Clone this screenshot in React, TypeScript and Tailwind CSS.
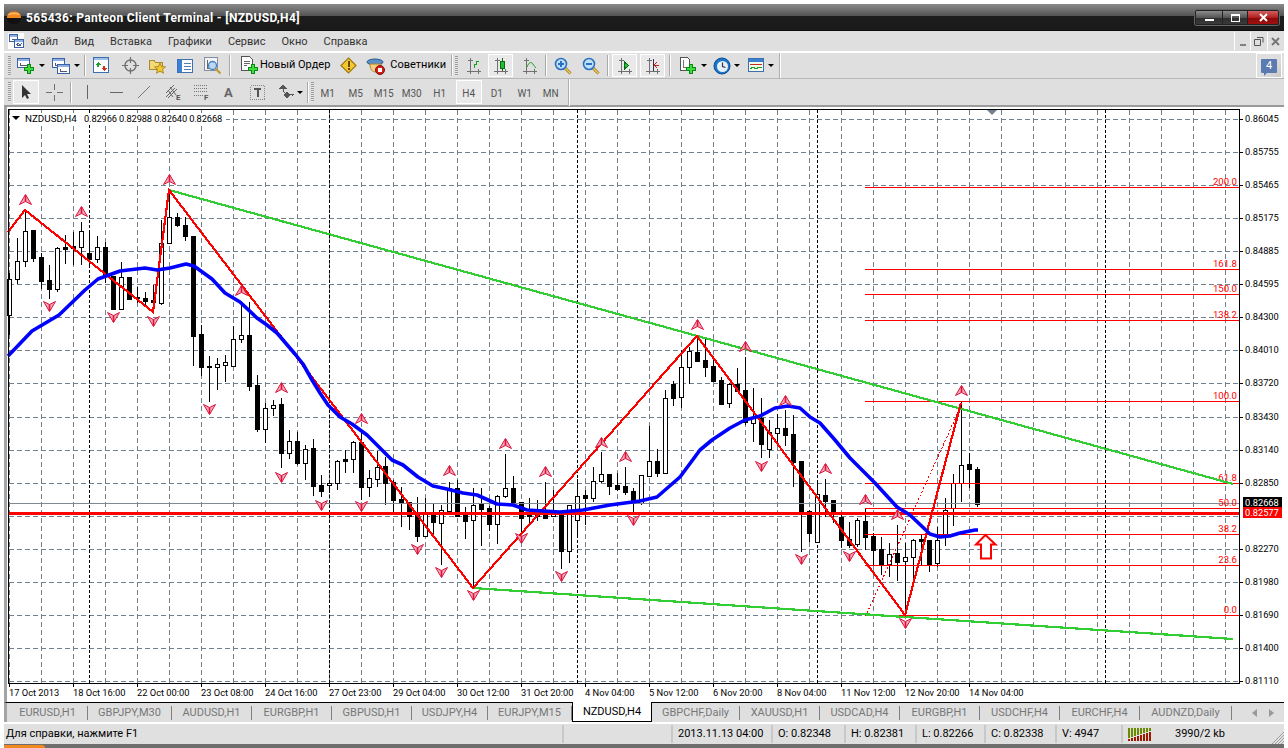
import type { ReactNode } from "react";

// [wick top, body top, body bottom, wick bottom, white?] for x = 9 + 8 * index
const CANDLES: [number, number, number, number, number][] = [
  [273, 279, 315, 335, 1], [238, 261, 279, 284, 1], [210, 231, 261, 267, 1], [230, 230, 258, 262, 0],
  [253, 257, 281, 289, 0], [265, 280, 289, 299, 0], [247, 248, 289, 292, 1], [235, 247, 249, 264, 0],
  [232, 246, 248, 265, 0], [222, 231, 247, 265, 1], [230, 253, 259, 267, 0], [236, 247, 259, 263, 1],
  [242, 247, 275, 283, 0], [276, 276, 309, 309, 0], [262, 277, 309, 309, 1], [277, 277, 299, 299, 0],
  [287, 297, 298, 303, 0], [292, 298, 301, 305, 0], [285, 300, 302, 312, 0], [220, 243, 303, 305, 1],
  [190, 217, 243, 243, 1], [213, 217, 225, 227, 0], [217, 225, 236, 241, 0], [236, 236, 336, 366, 0],
  [325, 334, 367, 376, 0], [356, 366, 367, 402, 0], [358, 364, 367, 390, 1], [355, 362, 365, 382, 1],
  [326, 339, 366, 366, 1], [303, 335, 339, 343, 1], [302, 335, 386, 391, 0], [375, 385, 429, 432, 0],
  [403, 408, 429, 443, 1], [400, 405, 408, 416, 1], [398, 404, 453, 468, 0], [430, 441, 453, 459, 1],
  [432, 441, 463, 465, 0], [445, 449, 463, 480, 1], [439, 448, 486, 496, 0], [475, 485, 491, 497, 0],
  [482, 483, 485, 490, 1], [460, 461, 483, 490, 1], [450, 459, 461, 473, 0], [441, 442, 459, 473, 1],
  [433, 442, 487, 500, 0], [470, 478, 487, 497, 1], [451, 467, 479, 487, 1], [457, 466, 483, 505, 0],
  [480, 482, 500, 515, 0], [487, 499, 503, 527, 0], [502, 502, 516, 530, 0], [497, 514, 536, 542, 0],
  [498, 514, 536, 537, 1], [504, 514, 522, 535, 0], [505, 510, 523, 565, 1], [482, 488, 511, 512, 1],
  [480, 488, 516, 517, 0], [507, 515, 521, 539, 0], [488, 505, 520, 588, 1], [488, 504, 509, 546, 0],
  [506, 508, 524, 531, 0], [495, 496, 524, 544, 1], [454, 488, 496, 498, 1], [476, 488, 503, 505, 0],
  [502, 502, 518, 532, 0], [498, 515, 516, 526, 0], [500, 514, 516, 521, 1], [482, 514, 518, 518, 0],
  [490, 514, 516, 517, 1], [514, 514, 551, 569, 0], [505, 505, 551, 563, 1], [479, 496, 520, 538, 1],
  [490, 495, 498, 525, 0], [467, 481, 498, 502, 1], [452, 474, 481, 483, 1], [474, 474, 486, 495, 0],
  [473, 485, 489, 491, 0], [467, 486, 492, 495, 0], [488, 491, 503, 512, 0], [475, 475, 503, 505, 1],
  [426, 461, 476, 477, 1], [449, 461, 473, 477, 0], [390, 398, 473, 474, 1], [381, 384, 398, 406, 0],
  [350, 367, 397, 408, 1], [347, 351, 367, 384, 1], [337, 352, 361, 362, 0], [338, 360, 367, 377, 0],
  [357, 366, 381, 382, 0], [377, 380, 404, 404, 0], [383, 384, 403, 408, 1], [368, 384, 391, 392, 0],
  [357, 390, 422, 425, 0], [388, 417, 423, 442, 1], [398, 418, 444, 458, 0], [420, 432, 449, 458, 1],
  [414, 428, 433, 443, 1], [410, 428, 435, 446, 0], [415, 434, 462, 487, 0], [461, 461, 512, 552, 0],
  [510, 511, 533, 542, 0], [482, 494, 542, 542, 1], [479, 495, 501, 517, 0], [500, 500, 514, 523, 0],
  [513, 517, 540, 548, 0], [522, 539, 545, 548, 0], [518, 520, 544, 547, 1], [509, 521, 537, 550, 0],
  [533, 536, 550, 565, 0], [537, 549, 565, 575, 0], [543, 554, 564, 577, 1], [525, 553, 562, 581, 0],
  [543, 557, 561, 613, 1], [539, 540, 557, 582, 1], [535, 539, 541, 565, 0], [540, 540, 565, 572, 0],
  [527, 540, 563, 567, 1], [498, 510, 537, 546, 1], [474, 483, 508, 526, 1], [402, 465, 483, 502, 1],
  [453, 464, 469, 488, 0], [467, 469, 504, 507, 0],
];

const GRID_Y = Array.from({ length: 18 }, (_, i) => 119 + (562 / 17) * i);
const GRID_X = Array.from({ length: 39 }, (_, i) => 9 + 32 * i);
const SEPARATORS = [89, 329, 577, 817, 1105];

const PRICES = [
  "0.86045", "0.85755", "0.85465", "0.85175", "0.84885", "0.84595", "0.84300", "0.84010", "0.83720",
  "0.83430", "0.83140", "0.82850", "", "0.82270", "0.81980", "0.81690", "0.81400", "0.81110",
];

const TIMES: [number, string][] = [
  [9, "17 Oct 2013"], [73, "18 Oct 16:00"], [137, "22 Oct 00:00"], [201, "23 Oct 08:00"], [265, "24 Oct 16:00"],
  [329, "27 Oct 23:00"], [393, "29 Oct 04:00"], [457, "30 Oct 12:00"], [521, "31 Oct 20:00"], [585, "4 Nov 04:00"],
  [649, "5 Nov 12:00"], [713, "6 Nov 20:00"], [777, "8 Nov 04:00"], [841, "11 Nov 12:00"], [905, "12 Nov 20:00"],
  [969, "14 Nov 04:00"],
];

const FIBO: [number, string][] = [
  [187, "200.0"], [269, "161.8"], [294, "150.0"], [320, "138.2"], [401, "100.0"], [483, "61.8"], [508, "50.0"],
  [534, "38.2"], [565, "23.6"], [615, "0.0"],
];

const FRACTALS_UP: [number, number][] = [
  [25, 200], [81, 212], [169, 180], [241, 291], [281, 388], [361, 419], [449, 471], [505, 444], [545, 472],
  [601, 443], [625, 457], [697, 325], [745, 347], [785, 401], [825, 469], [865, 500], [897, 515], [961, 391],
];

const FRACTALS_DOWN: [number, number][] = [
  [49, 306], [113, 317], [153, 321], [209, 409], [281, 477], [321, 505], [361, 506], [417, 549], [441, 572],
  [473, 595], [521, 538], [561, 576], [633, 520], [761, 466], [801, 559], [849, 556], [905, 623],
];

const ZIGZAG = "8,232 25,210 153,312 169,190 473,588 697,336 905,615 961,403";

const MA =
  "8,356 32,331 59,315 85,290 98,279 120,271 145,268 157,270 170,268 186,264 194,266 212,279 225,293 240,302 " +
  "257,318 267,325 277,333 295,354 303,364 312,380 320,393 328,405 340,417 352,424 367,435 380,448 392,460 " +
  "403,465 418,477 433,486 447,489 463,493 477,495 497,504 513,505 527,510 560,512 583,510 610,505 640,501 " +
  "657,497 680,477 700,450 712,440 730,428 745,420 760,416 775,408 788,406 800,408 810,417 820,423 835,440 " +
  "850,458 875,483 897,507 910,515 930,534 940,537 950,536 960,533 975,530 978,530";

const TABS: [string, string][] = [
  ["EURUSD,H1", "w-[80px]"], ["GBPJPY,M30", "w-[84px]"], ["AUDUSD,H1", "w-[80px]"], ["EURGBP,H1", "w-[80px]"],
  ["GBPUSD,H1", "w-[80px]"], ["USDJPY,H4", "w-[76px]"], ["EURJPY,M15", "w-[84px]"],
];

const TABS_AFTER: [string, string][] = [
  ["GBPCHF,Daily", "w-[88px]"], ["XAUUSD,H1", "w-[80px]"], ["USDCAD,H4", "w-[80px]"], ["EURGBP,H1", "w-[80px]"],
  ["USDCHF,H4", "w-[80px]"], ["EURCHF,H4", "w-[80px]"], ["AUDNZD,Daily", "w-[92px]"],
];

const MENU = ["Файл", "Вид", "Вставка", "Графики", "Сервис", "Окно", "Справка"];

function Icon({ children, w = 18, h = 18 }: { children: ReactNode; w?: number; h?: number }) {
  return (
    <svg width={w} height={h} viewBox={`0 0 ${w} ${h}`} className="block shrink-0" shapeRendering="crispEdges">
      {children}
    </svg>
  );
}

function Caret() {
  return <span className="ml-[3px] h-0 w-0 border-x-[3px] border-t-[3px] border-x-transparent border-t-black" />;
}

function Sep({ className }: { className: string }) {
  return <span className={`h-[21px] w-[2px] border-l border-r border-l-[#a8a8a8] border-r-white ${className}`} />;
}

function Grip() {
  return (
    <span className="block h-[20px] w-[3px] bg-[repeating-linear-gradient(to_bottom,#9a9a9a_0,#9a9a9a_1px,#e8e8e8_1px,#e8e8e8_2px)]" />
  );
}

function PlusBadge({ x, y }: { x: number; y: number }) {
  return (
    <g>
      <rect x={x + 3} y={y} width="4" height="10" fill="#0a8a14" />
      <rect x={x} y={y + 3} width="10" height="4" fill="#0a8a14" />
      <rect x={x + 4} y={y + 1} width="2" height="8" fill="#3fdc3f" />
      <rect x={x + 1} y={y + 4} width="8" height="2" fill="#3fdc3f" />
    </g>
  );
}

function MiniWindow({ x, y, w, h }: { x: number; y: number; w: number; h: number }) {
  return (
    <g>
      <rect x={x + 0.5} y={y + 0.5} width={w} height={h} fill="#fff" stroke="#3a62a8" />
      <rect x={x + 1} y={y + 1} width={w - 1} height="2" fill="#8fb0e0" />
      <path d={`M${x + 3} ${y + 5}v${h - 7}h${w - 5}`} stroke="#556" fill="none" />
    </g>
  );
}

function Axes({ children }: { children?: ReactNode }) {
  return (
    <Icon w={16} h={18}>
      <path d="M4.5 1v16M2 3.5h5M1 14.5h14M12.5 12v5" stroke="#707070" fill="none" />
      {children}
    </Icon>
  );
}

function Magnifier({ minus }: { minus?: boolean }) {
  return (
    <Icon w={18} h={18}>
      <g shapeRendering="auto">
        <path d="M10.5 10.5l6 6" stroke="#a07a20" strokeWidth="3" />
        <path d="M10.5 10.5l6 6" stroke="#f0d060" strokeWidth="1.3" />
        <circle cx="7" cy="7" r="5.5" fill="#bfe0f8" stroke="#2a70c0" strokeWidth="1.6" />
      </g>
      <rect x="4" y="6" width="6" height="2" fill="#2a70c0" />
      {!minus && <rect x="6" y="4" width="2" height="6" fill="#2a70c0" />}
    </Icon>
  );
}

function TitleBar() {
  return (
    <div className="flex h-[27px] items-center bg-[linear-gradient(to_bottom,#8a8a8a_0,#555_43%,#1d1d1d_44%,#1a1a1a_96%,#000_100%)] pl-[2px] pr-[5px]">
      <svg width="16" height="16" viewBox="0 0 16 16" className="shrink-0">
        <path d="M1 8c0-5 3-6.5 7-6.5S15 3 15 8z" fill="#f08a20" />
        <path d="M2 5c1-3 11-3 12 0-3-1-9-1-12 0z" fill="#fbc070" />
        <path d="M1 8h14c0 4-3 6-7 6S1 12 1 8z" fill="#111" />
      </svg>
      <span className="ml-[4px] font-['Roboto'] text-[12px] font-bold tracking-[0.33px] whitespace-nowrap text-white">
        565436: Panteon Client Terminal - [NZDUSD,H4]
      </span>
      <div className="ml-auto flex h-[15px] overflow-hidden rounded-[2px] border border-[#222] shadow-[0_0_0_1px_#666]">
        <div className="flex w-[26px] items-end justify-center bg-[linear-gradient(to_bottom,#8c8c8c,#555_50%,#2e2e2e_52%,#3a3a3a)] pb-[3px]">
          <span className="h-[2px] w-[9px] bg-white" />
        </div>
        <div className="flex w-[26px] items-center justify-center border-x border-[#222] bg-[linear-gradient(to_bottom,#8c8c8c,#555_50%,#2e2e2e_52%,#3a3a3a)]">
          <span className="h-[8px] w-[9px] border border-t-2 border-white" />
        </div>
        <div className="flex w-[30px] items-center justify-center bg-[linear-gradient(to_bottom,#d06060,#b02020_50%,#8a0a0a_52%,#a01010)]">
          <svg width="9" height="9" viewBox="0 0 9 9">
            <path d="M1 1l7 7M8 1l-7 7" stroke="#fff" strokeWidth="2" />
          </svg>
        </div>
      </div>
    </div>
  );
}

function MenuBar() {
  return (
    <div className="flex h-[20px] items-center bg-[#dfdfdf] pl-[4px] text-[11px] text-[#333]">
      <Icon w={16} h={16}>
        <rect width="16" height="16" fill="#fff" />
        <MiniWindow x={1} y={1} w={8} h={7} />
        <MiniWindow x={6} y={6} w={9} h={8} />
        <path d="M8 12l2-2 2 2 2-2" stroke="#3a62a8" fill="none" />
      </Icon>
      <div className="ml-[7px] flex gap-[16px] pt-[2px]">
        {MENU.map((item) => (
          <span key={item}>{item}</span>
        ))}
      </div>
      <div className="ml-auto flex h-[18px] items-center pr-[1px]">
        <span className="flex h-[18px] w-[16px] items-end justify-center border-l border-white pb-[4px]">
          <span className="h-[2px] w-[6px] bg-[#808080]" />
        </span>
        <span className="flex h-[18px] w-[17px] items-center justify-center border-l border-white text-[#555]">
          <svg width="10" height="10" viewBox="0 0 10 10">
            <path d="M3 1.5h6v5M0.5 3.5h6v6h-6z" stroke="#555" fill="none" />
          </svg>
        </span>
        <span className="flex h-[18px] w-[16px] items-center justify-center border-l border-white">
          <svg width="9" height="9" viewBox="0 0 9 9">
            <path d="M1 1l7 7M8 1l-7 7" stroke="#777" strokeWidth="2" />
          </svg>
        </span>
      </div>
    </div>
  );
}

function ToolbarOne() {
  return (
    <div className="relative flex h-[28px] items-center border-t-2 border-b border-t-white border-b-[#b8b8b8] bg-[#dfdfdf] pl-[4px]">
      <Grip />
      <div className="ml-[5px] flex items-center">
        <Icon w={20} h={18}>
          <MiniWindow x={1} y={1} w={12} h={9} />
          <PlusBadge x={8} y={7} />
        </Icon>
        <Caret />
      </div>
      <div className="ml-[6px] flex items-center">
        <Icon w={20} h={18}>
          <MiniWindow x={1} y={1} w={12} h={9} />
          <MiniWindow x={6} y={7} w={12} h={9} />
        </Icon>
        <Caret />
      </div>
      <Sep className="ml-[4px]" />
      <div className="ml-[7px]">
        <Icon w={17} h={17}>
          <rect x="0.5" y="0.5" width="15" height="15" fill="#fff" stroke="#3a70b0" />
          <rect x="1" y="1" width="14" height="2" fill="#a0c0e8" />
          <path d="M5 5l3 3H6v2H4V8H2z" fill="#20a030" />
          <path d="M11 14l-3-3h2V9h2v2h2z" fill="#d03020" />
        </Icon>
      </div>
      <div className="ml-[12px]">
        <Icon w={17} h={17}>
          <g shapeRendering="auto">
            <circle cx="8.5" cy="8.5" r="5.5" fill="none" stroke="#707070" strokeWidth="1.4" />
            <path d="M8.5 0v6M8.5 11v6M0 8.5h6M11 8.5h6" stroke="#707070" strokeWidth="1.2" />
          </g>
        </Icon>
      </div>
      <div className="ml-[9px]">
        <Icon w={18} h={17}>
          <path d="M1 3h5l1 2h7v7H1z" fill="#f5d878" stroke="#a88a30" />
          <path
            d="M12 6l1.6 3.6 3.9.3-3 2.5 1 3.8-3.5-2-3.5 2 1-3.8-3-2.5 3.9-.3z"
            fill="#f0c830"
            stroke="#b08a20"
            shapeRendering="auto"
          />
        </Icon>
      </div>
      <div className="ml-[11px]">
        <Icon w={16} h={16}>
          <rect x="0.5" y="1.5" width="15" height="13" fill="#fff" stroke="#4070b0" />
          <rect x="1" y="2" width="4" height="12" fill="#3c80d8" />
          <path d="M7 5h7M7 8h7M7 11h7" stroke="#5080b8" />
        </Icon>
      </div>
      <div className="ml-[11px]">
        <Icon w={18} h={18}>
          <rect x="0.5" y="0.5" width="13" height="13" fill="#f4f4f4" stroke="#8090a8" />
          <path d="M3 3v8h8" stroke="#666" fill="none" />
          <g shapeRendering="auto">
            <circle cx="8.5" cy="8.5" r="4" fill="#bcd8f0" stroke="#4a80c0" strokeWidth="1.3" />
            <path d="M11.5 11.5l5 5" stroke="#c09a30" strokeWidth="2.2" />
          </g>
        </Icon>
      </div>
      <Sep className="ml-[7px]" />
      <div className="ml-[9px] flex items-center">
        <Icon w={19} h={19}>
          <path d="M1.5 0.5h8l3 3v11h-11z" fill="#fff" stroke="#555" />
          <path d="M4 5h6M4 7h6M4 9h3" stroke="#666" />
          <PlusBadge x={8} y={8} />
        </Icon>
        <span className="ml-[1px] whitespace-nowrap text-[11px] text-black">Новый Ордер</span>
      </div>
      <div className="ml-[10px]">
        <Icon w={17} h={17}>
          <g shapeRendering="auto">
            <path d="M8.5 1L16 8.5 8.5 16 1 8.5z" fill="#f4c830" stroke="#a07a10" strokeWidth="1.2" />
          </g>
          <rect x="8" y="4" width="2" height="6" fill="#6a4a00" />
          <rect x="8" y="11" width="2" height="2" fill="#6a4a00" />
        </Icon>
      </div>
      <div className="ml-[9px] flex items-center">
        <Icon w={20} h={18}>
          <g shapeRendering="auto">
            <ellipse cx="9" cy="5" rx="8" ry="3" fill="#5a90c8" stroke="#2a5a90" />
            <path d="M4 7c0 5 2 8 6 8s5-4 5-8z" fill="#f4d080" stroke="#b08030" />
            <circle cx="14" cy="13" r="4.5" fill="#d02018" stroke="#801010" />
            <rect x="12" y="11" width="4" height="4" fill="#fff" />
          </g>
        </Icon>
        <span className="ml-[4px] whitespace-nowrap text-[11px] text-black">Советники</span>
      </div>
      <Sep className="ml-[5px]" />
      <span className="ml-[2px]">
        <Grip />
      </span>
      <div className="ml-[8px]">
        <Axes>
          <path d="M8.5 11V7.5h2V4h2" stroke="#10a020" fill="none" />
        </Axes>
      </div>
      <div className="ml-[6px] flex h-[23px] w-[25px] items-center justify-center border border-white bg-[#e9e9e9] bg-[radial-gradient(#cfcfcf_0.6px,transparent_0.7px)] bg-[length:2px_2px]">
        <Axes>
          <rect x="7.5" y="4.5" width="4" height="7" fill="#20c030" stroke="#0a6a14" />
          <path d="M9.5 1v3M9.5 12v2" stroke="#0a6a14" />
        </Axes>
      </div>
      <div className="ml-[9px]">
        <Axes>
          <path d="M5 10c2-5 4-5 5-4s2 3 4 5" stroke="#10a020" fill="none" shapeRendering="auto" />
        </Axes>
      </div>
      <Sep className="ml-[7px]" />
      <div className="ml-[7px]">
        <Magnifier />
      </div>
      <div className="ml-[10px]">
        <Magnifier minus />
      </div>
      <Sep className="ml-[7px]" />
      <div className="ml-[3px] flex h-[23px] w-[25px] items-center justify-center border border-white bg-[#e9e9e9] bg-[radial-gradient(#cfcfcf_0.6px,transparent_0.7px)] bg-[length:2px_2px]">
        <Axes>
          <path d="M7.5 5l4 3.5-4 3.5z" fill="#20c030" stroke="#0a6a14" />
        </Axes>
      </div>
      <div className="ml-[3px] flex h-[23px] w-[25px] items-center justify-center border border-white bg-[#e9e9e9] bg-[radial-gradient(#cfcfcf_0.6px,transparent_0.7px)] bg-[length:2px_2px]">
        <Axes>
          <path d="M14 8H9l3-3M9 8l3 3" stroke="#c02010" fill="none" />
          <path d="M8.5 2v12" stroke="#303060" />
        </Axes>
      </div>
      <Sep className="ml-[4px]" />
      <div className="ml-[8px] flex items-center">
        <Icon w={19} h={18}>
          <path d="M1.5 0.5h7l2 2v11h-9z" fill="#fff" stroke="#555" />
          <path d="M4 3v7h6" stroke="#777" fill="none" />
          <PlusBadge x={7} y={7} />
        </Icon>
        <Caret />
      </div>
      <div className="ml-[6px] flex items-center">
        <svg width="18" height="18" viewBox="0 0 18 18" className="block shrink-0">
          <circle cx="9" cy="9" r="8" fill="#1a78c8" stroke="#0a4a90" />
          <circle cx="9.5" cy="9.5" r="5.5" fill="#e8f0f8" />
          <path d="M9.5 5.5v4l3 1" stroke="#334" fill="none" strokeWidth="1.2" />
        </svg>
        <Caret />
      </div>
      <div className="ml-[8px] flex items-center">
        <Icon w={17} h={17}>
          <rect x="0.5" y="1.5" width="15" height="13" fill="#f4f8e8" stroke="#3a70b0" />
          <rect x="1" y="2" width="14" height="3" fill="#3a80d0" />
          <path d="M2 8l3-1 3 1 3-1 3 0" stroke="#c03020" fill="none" />
          <path d="M2 12l3-2 3 2 3-2 3 1" stroke="#20a030" fill="none" />
        </Icon>
        <Caret />
      </div>
      <span className="ml-[5px] h-[25px] w-[2px] border-l border-r border-l-[#b0b0b0] border-r-white" />
      <div className="ml-auto mr-[2px] flex h-[25px] w-[26px] items-center justify-center border border-white bg-[linear-gradient(135deg,#dfdfdf_50%,#c8c8c8)]">
        <div className="relative flex h-[14px] w-[16px] items-center justify-center rounded-[1px] bg-[#5a7ab0] text-[11px] leading-none text-white">
          4
          <span className="absolute top-[13px] left-[3px] h-0 w-0 border-t-[4px] border-r-[4px] border-t-[#5a7ab0] border-r-transparent" />
        </div>
      </div>
    </div>
  );
}

function Period({ label, className, active }: { label: string; className: string; active?: boolean }) {
  return (
    <span
      className={`flex h-[24px] items-center justify-center pt-[2px] text-[10px] text-[#555] ${className} ${
        active ? "border border-white bg-[#e9e9e9] bg-[radial-gradient(#cfcfcf_0.6px,transparent_0.7px)] bg-[length:2px_2px]" : ""
      }`}
    >
      {label}
    </span>
  );
}

function ToolbarTwo() {
  return (
    <div className="flex h-[28px] items-center border-b-2 border-b-[#9a9a9a] bg-[#dfdfdf] pl-[4px]">
      <Grip />
      <div className="ml-[2px] flex h-[24px] w-[26px] items-center justify-center border border-white bg-[#e9e9e9] bg-[radial-gradient(#cfcfcf_0.6px,transparent_0.7px)] bg-[length:2px_2px]">
        <svg width="12" height="16" viewBox="0 0 12 16">
          <path d="M2 1v13l3-3 2 4 2-1-2-4h4z" fill="#333" />
        </svg>
      </div>
      <div className="ml-[7px]">
        <Icon w={17} h={17}>
          <path d="M8.5 0v6M8.5 11v6M0 8.5h6M11 8.5h6" stroke="#707070" />
        </Icon>
      </div>
      <Sep className="ml-[7px]" />
      <span className="ml-[15px] h-[14px] w-px bg-[#666]" />
      <span className="ml-[22px] h-px w-[13px] bg-[#666]" />
      <div className="ml-[14px]">
        <Icon w={14} h={14}>
          <path d="M1 13L13 1" stroke="#777" shapeRendering="auto" />
        </Icon>
      </div>
      <div className="ml-[14px]">
        <Icon w={18} h={18}>
          <path d="M1 10L9 2M1 14L10 5M3 15L12 6M5 4l6 8M3 7l5 7" stroke="#666" fill="none" shapeRendering="auto" />
          <text x="11" y="17" className="fill-[#555] text-[8px] font-bold">
            E
          </text>
        </Icon>
      </div>
      <div className="ml-[10px]">
        <Icon w={18} h={18}>
          <path d="M1 2.5h13M1 5.5h13M1 8.5h13M1 12.5h9" stroke="#777" strokeDasharray="1 1" />
          <text x="11" y="17" className="fill-[#555] text-[8px] font-bold">
            F
          </text>
        </Icon>
      </div>
      <span className="ml-[13px] text-[13px] leading-none font-bold text-[#666]">A</span>
      <div className="ml-[17px]">
        <Icon w={15} h={15}>
          <rect x="0.5" y="0.5" width="14" height="14" fill="none" stroke="#888" strokeDasharray="1 1" />
          <path d="M4 4h7M7.5 4v8" stroke="#555" strokeWidth="2" />
        </Icon>
      </div>
      <div className="ml-[13px] flex items-center">
        <Icon w={16} h={14}>
          <path d="M5 0l3 3H2zM5 3v3" fill="#555" stroke="#555" />
          <path d="M9 7l3 3-3 3-3-3zM5 6l3 3" fill="#555" stroke="#555" />
          <path d="M11 9h5l-2 2" fill="none" stroke="#555" />
        </Icon>
        <Caret />
      </div>
      <Sep className="ml-[4px]" />
      <span className="ml-[2px]">
        <Grip />
      </span>
      <Period label="M1" className="w-[28px]" />
      <Period label="M5" className="w-[28px]" />
      <Period label="M15" className="w-[28px]" />
      <Period label="M30" className="w-[28px]" />
      <Period label="H1" className="w-[28px]" />
      <Period label="H4" className="ml-[2px] w-[26px]" active />
      <Period label="D1" className="w-[30px]" />
      <Period label="W1" className="w-[26px]" />
      <Period label="MN" className="w-[26px]" />
      <span className="ml-[4px] h-[27px] w-[2px] border-l border-r border-l-[#b0b0b0] border-r-white" />
    </div>
  );
}

function Fractal({ x, y, down }: { x: number; y: number; down?: boolean }) {
  return (
    <g transform={`translate(${x} ${y}) scale(1 ${down ? -1 : 1})`}>
      <path d="M0 -5.5L6 4.5 0 1.5 -6 4.5Z" fill="#f2a8b8" stroke="#dc143c" strokeWidth="1" strokeLinejoin="round" />
      <path d="M0 -5L0 1.5" stroke="#dc143c" strokeWidth="1.6" />
    </g>
  );
}

function Candles() {
  return (
    <g shapeRendering="crispEdges">
      {CANDLES.map(([top, bodyTop, bodyBottom, bottom, white], i) => {
        const x = 9 + 8 * i;
        return (
          <g key={x}>
            <rect x={x} y={top} width="1" height={bottom - top} fill="#000" />
            {white ? (
              <rect x={x - 1.5} y={bodyTop + 0.5} width="4" height={bodyBottom - bodyTop} fill="#fff" stroke="#000" />
            ) : (
              <rect x={x - 2} y={bodyTop} width="5" height={bodyBottom - bodyTop + 1} fill="#000" />
            )}
          </g>
        );
      })}
    </g>
  );
}

function Chart() {
  return (
    <div className="h-[595px] border-l-[3px] border-l-[#a4a4a4] bg-white">
      <svg width="1277" height="595" viewBox="7 107 1277 595" className="block font-['Roboto'] text-[9.3px]">
        {/* grid */}
        <g shapeRendering="crispEdges" stroke="#708090" strokeDasharray="5 3">
          {GRID_Y.map((y) => (
            <line key={y} x1="9" x2="1239" y1={Math.round(y) + 0.5} y2={Math.round(y) + 0.5} />
          ))}
          {GRID_X.map((x) => (
            <line key={x} x1={x + 0.5} x2={x + 0.5} y1="110" y2="683" />
          ))}
        </g>
        <g shapeRendering="crispEdges" stroke="#000" strokeDasharray="3 2">
          {SEPARATORS.map((x) => (
            <line key={x} x1={x + 0.5} x2={x + 0.5} y1="110" y2="683" />
          ))}
        </g>

        <Candles />

        {/* horizontal lines */}
        <g shapeRendering="crispEdges">
          <rect x="9" y="503" width="1231" height="1" fill="#808a94" />
          {FIBO.map(([y]) => (
            <rect key={y} x="865" y={y} width="375" height="1" fill="#ff0000" />
          ))}
          <rect x="9" y="512" width="1231" height="3" fill="#ff0000" />
        </g>
        <g fill="#ff0000" textAnchor="end" fontSize="9.6">
          {FIBO.map(([y, label]) => (
            <text key={label} x="1237" y={y - 2}>
              {label}
            </text>
          ))}
        </g>

        <polyline points="169,190 1233,484" fill="none" stroke="#32cd32" strokeWidth="2.2" shapeRendering="crispEdges" />
        <polyline points="473,588 1233,639" fill="none" stroke="#32cd32" strokeWidth="2.2" shapeRendering="crispEdges" />
        <polyline points={ZIGZAG} fill="none" stroke="#ff0000" strokeWidth="2.2" shapeRendering="crispEdges" />
        <line x1="867" y1="613" x2="960" y2="408" stroke="#ff0000" strokeDasharray="2 2" shapeRendering="crispEdges" />
        <polyline points={MA} fill="none" stroke="#0000ff" strokeWidth="3.6" strokeLinejoin="round" />

        {FRACTALS_UP.map(([x, y]) => (
          <Fractal key={`u${x}`} x={x + 0.5} y={y} />
        ))}
        {FRACTALS_DOWN.map(([x, y]) => (
          <Fractal key={`d${x}`} x={x + 0.5} y={y} down />
        ))}

        <path d="M985.5 535l10 9.5h-4.5v14h-10v-14h-5z" fill="#fff" stroke="#ff0000" strokeWidth="2" />

        {/* frame */}
        <g shapeRendering="crispEdges" fill="#000">
          <rect x="8" y="109" width="1232" height="1" />
          <rect x="8" y="109" width="1" height="575" />
          <rect x="1239" y="109" width="1" height="575" />
          <rect x="8" y="683" width="1232" height="1" />
        </g>
        <path d="M987 110h10l-5 5z" fill="#708090" />

        {/* info line */}
        <rect x="10" y="113" width="216" height="11" fill="#fff" />
        <path d="M12 116h8l-4 4z" fill="#000" />
        <text x="25" y="122" fill="#000" fontSize="9.8">
          NZDUSD,H4
        </text>
        <text x="84" y="122" fill="#000" letterSpacing="-0.13">
          0.82966 0.82988 0.82640 0.82668
        </text>

        {/* price scale */}
        <g fill="#000">
          {PRICES.map((price, i) =>
            price ? (
              <g key={price}>
                <rect x="1240" y={Math.round(GRID_Y[i])} width="3" height="1" shapeRendering="crispEdges" />
                <text x="1245" y={Math.round(GRID_Y[i]) + 3}>
                  {price}
                </text>
              </g>
            ) : null
          )}
        </g>
        <rect x="1243" y="497" width="39" height="10" fill="#000" />
        <text x="1245" y="505.5" fill="#fff">
          0.82668
        </text>
        <rect x="1243" y="507" width="39" height="11" fill="#ff0000" />
        <text x="1245" y="516" fill="#fff">
          0.82577
        </text>

        {/* time scale */}
        {TIMES.map(([x, label]) => (
          <g key={label}>
            <rect x={x} y="684" width="1" height="3" fill="#000" shapeRendering="crispEdges" />
            <text x={x} y="696" fill="#000">
              {label}
            </text>
          </g>
        ))}
      </svg>
    </div>
  );
}

function Tab({ label, className }: { label: string; className: string }) {
  return (
    <span className={`flex h-[14px] items-center justify-center border-r border-r-[#808080] pt-[1px] ${className}`}>{label}</span>
  );
}

function TabBar() {
  return (
    <div className="flex h-[20px] items-center border-t border-l-[3px] border-t-black border-l-[#a4a4a4] bg-[#dfdfdf] pl-[1px] text-[11px] text-[#777]">
      {TABS.map(([label, width]) => (
        <Tab key={label} label={label} className={width} />
      ))}
      <span className="-mt-px flex h-[20px] w-[80px] items-center justify-center border-x border-b border-black bg-white pt-[1px] text-black">
        NZDUSD,H4
      </span>
      {TABS_AFTER.map(([label, width]) => (
        <Tab key={label + width} label={label} className={width} />
      ))}
      <div className="ml-[20px] flex gap-[10px]">
        <span className="h-0 w-0 border-y-[4px] border-r-[5px] border-y-transparent border-r-[#999]" />
        <span className="ml-[2px] h-0 w-0 border-y-[4px] border-l-[5px] border-y-transparent border-l-[#999]" />
      </div>
    </div>
  );
}

function StatusCell({ children, className }: { children?: ReactNode; className: string }) {
  return (
    <span className={`flex h-[18px] items-center border-r-2 border-r-[#c8c8c8] pt-[1px] whitespace-nowrap ${className}`}>{children}</span>
  );
}

function StatusBar() {
  const bars = [2, 3, 4, 5, 6, 7, 8, 9];
  return (
    <div className="mt-[2px] flex h-[20px] items-center bg-[#e0e0e0] text-[11px] text-black">
      <StatusCell className="w-[560px] pl-[2px]">Для справки, нажмите F1</StatusCell>
      <StatusCell className="w-[109px]" />
      <StatusCell className="w-[100px] pl-[5px]">2013.11.13 04:00</StatusCell>
      <StatusCell className="w-[73px] pl-[5px]">O: 0.82348</StatusCell>
      <StatusCell className="w-[71px] pl-[5px]">H: 0.82381</StatusCell>
      <StatusCell className="w-[69px] pl-[5px]">L: 0.82266</StatusCell>
      <StatusCell className="w-[71px] pl-[5px]">C: 0.82338</StatusCell>
      <StatusCell className="w-[66px] pl-[5px]">V: 4947</StatusCell>
      <div className="ml-[5px] flex h-[13px] w-[24px] gap-px">
        {bars.map((h) => (
          <span key={h} className="flex w-[2px] flex-col gap-px">
            <span className="flex-1 bg-[#6a8a00]" />
            <span className="bg-[#a01800]" style={{ height: h }} />
          </span>
        ))}
      </div>
      <span className="ml-[23px] pt-[1px] whitespace-nowrap">3990/2 kb</span>
      <svg width="13" height="13" viewBox="0 0 13 13" className="mt-auto ml-auto">
        <path d="M13 1L1 13M13 4L4 13M13 7l-6 6M13 10l-3 3" stroke="#a0a0a0" />
      </svg>
    </div>
  );
}

export default function App() {
  return (
    <div className="h-[748px] w-[1288px] overflow-hidden bg-white pt-[4px] pl-[4px] font-['Roboto',sans-serif]">
      <div className="flex h-[744px] w-[1280px] flex-col">
        <TitleBar />
        <MenuBar />
        <ToolbarOne />
        <ToolbarTwo />
        <Chart />
        <TabBar />
        <StatusBar />
        <div className="mt-auto h-[4px] bg-[#6e6e6e]">
          <div className="mt-[1px] h-[3px] w-[41px] rounded-tr-[3px] bg-[#f08a20]" />
        </div>
      </div>
    </div>
  );
}
